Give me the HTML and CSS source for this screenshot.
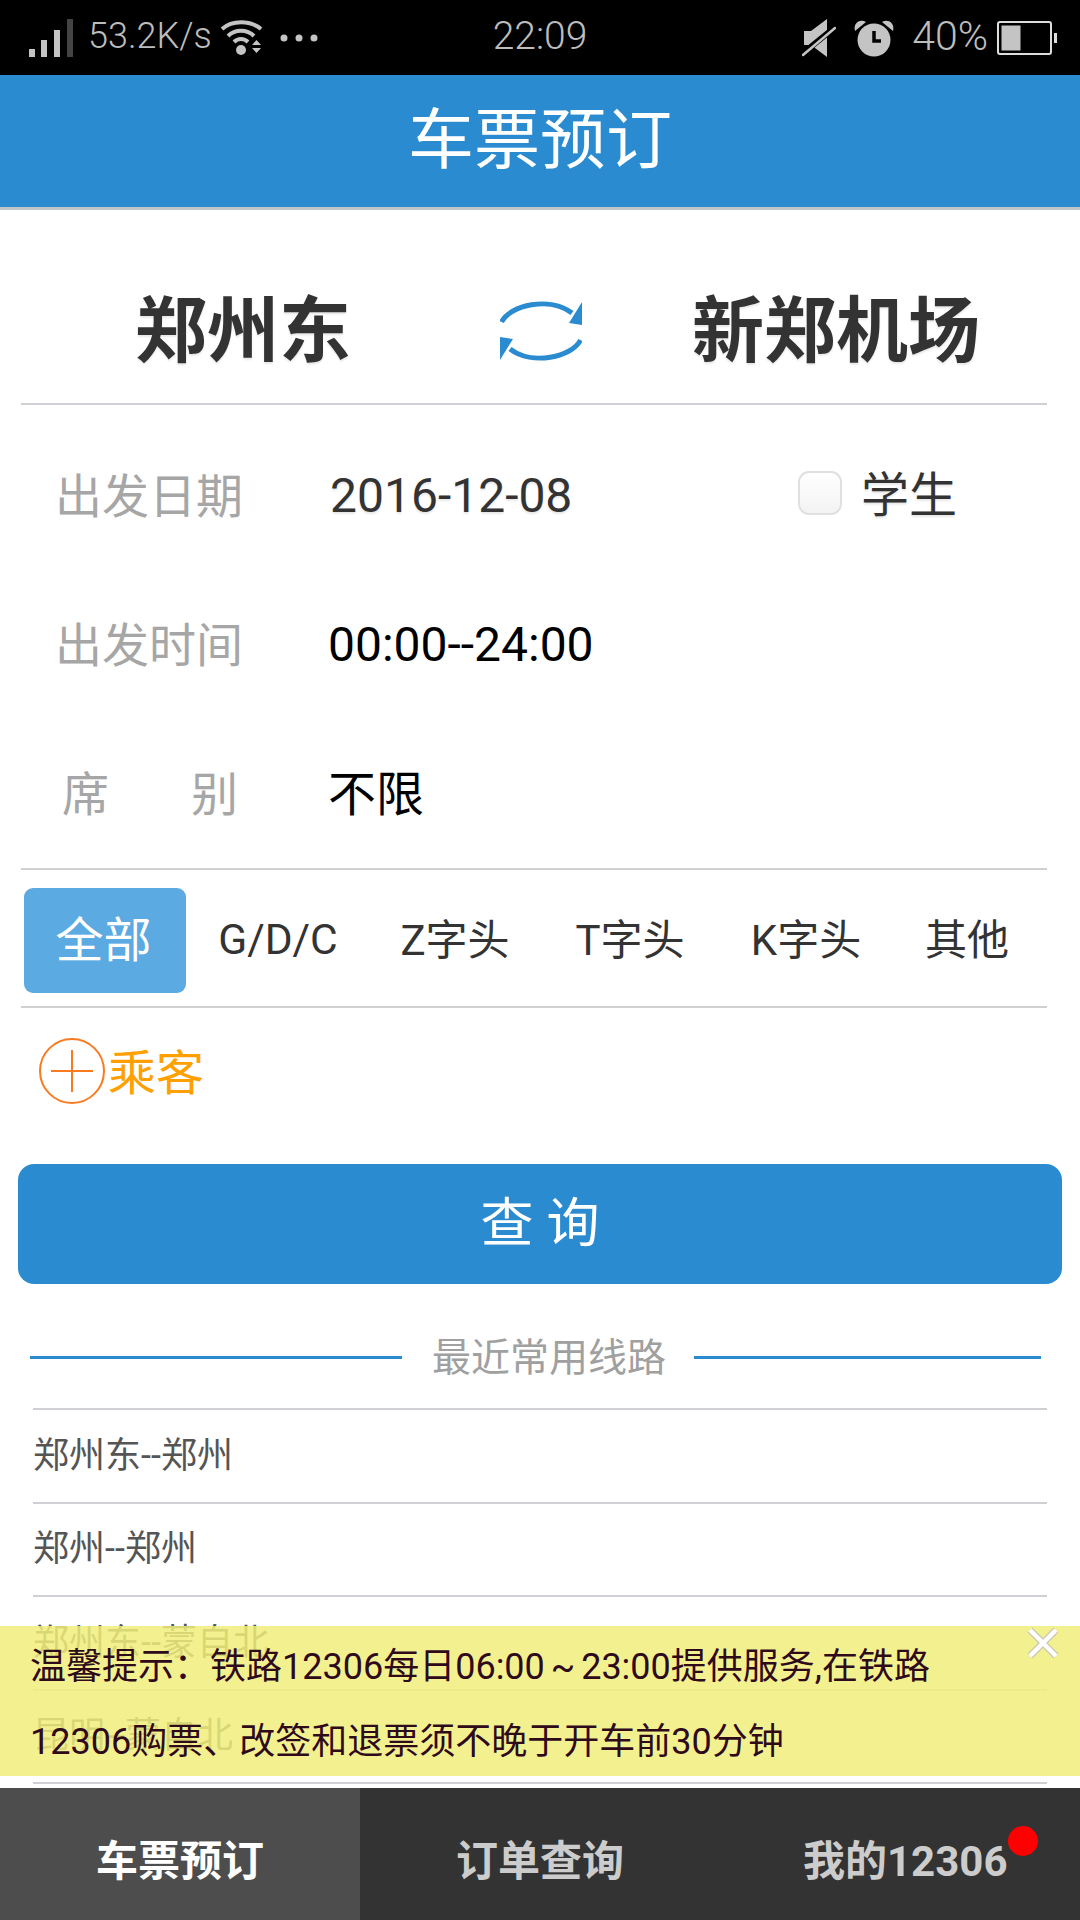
FILE: index.html
```html
<!DOCTYPE html>
<html lang="zh">
<head>
<meta charset="utf-8">
<title>车票预订</title>
<link rel="stylesheet" href="styles.css">
</head>
<body>
<div class="app">
  <div class="statusbar">
    <div class="status-left">
      <svg class="ic-signal" viewBox="0 0 45 38"><rect x="0" y="30" width="6" height="8" fill="#c4c4c4"/><rect x="12" y="21" width="6" height="17" fill="#c4c4c4"/><rect x="25" y="11" width="6" height="27" fill="#c4c4c4"/><rect x="38" y="0" width="6" height="38" fill="#444"/></svg>
      <span class="speed">53.2K/s</span>
      <svg class="ic-wifi" viewBox="0 0 44 38" fill="none" stroke="#c4c4c4" stroke-width="4"><path d="M2 10C12 1 30 1 41 10"/><path d="M8 17C15 10 27 10 34 17"/><path d="M14 23C18 19 24 19 28 23"/><circle cx="21" cy="31" r="5" fill="#c4c4c4" stroke="none"/><path d="M32 26h9l-4.500-5zM32 29h9l-4.500 5z" fill="#c4c4c4" stroke="none"/></svg>
      <svg class="ic-dots" viewBox="0 0 38 8"><circle cx="4" cy="4" r="3.500" fill="#c4c4c4"/><circle cx="19" cy="4" r="3.500" fill="#c4c4c4"/><circle cx="34" cy="4" r="3.500" fill="#c4c4c4"/></svg>
    </div>
    <span class="clock">22:09</span>
    <div class="status-right">
      <svg class="ic-mute" viewBox="0 0 34 38"><path d="M2 12h7L25 0v38L9 26H2z" fill="#c4c4c4"/><path d="M0 35L32 9" stroke="#000" stroke-width="6"/><path d="M1 36L33 9" stroke="#c4c4c4" stroke-width="2.500" stroke-linecap="round"/></svg>
      <svg class="ic-alarm" viewBox="0 0 40 38"><path d="M1 12C-1 5 5 -1 12 3zM39 12C41 5 35 -1 28 3z" fill="#c4c4c4"/><circle cx="20" cy="21" r="16.500" fill="#c4c4c4"/><path d="M20 12v10h7" fill="none" stroke="#000" stroke-width="3.500"/></svg>
      <span class="battery-text">40%</span>
      <svg class="ic-battery" viewBox="0 0 60 34"><rect x="1" y="1" width="53" height="32" rx="2" fill="none" stroke="#ddd" stroke-width="2"/><rect x="4.500" y="4.500" width="19" height="25" fill="#c4c4c4"/><rect x="57" y="12" width="3" height="10" fill="#ddd"/></svg>
    </div>
  </div>

  <header class="topbar">车票预订</header>

  <main class="content">
    <section class="stations">
      <div class="station">郑州东</div>
      <svg class="ic-swap" viewBox="0 0 82 62" fill="none"><g><path d="M1.500 22C10 5 50 -4 72 13" stroke="#2b8bd0" stroke-width="5"/><path d="M82 2V25L69 23z" fill="#2b8bd0"/></g><g transform="rotate(180 41 31)"><path d="M1.500 22C10 5 50 -4 72 13" stroke="#2b8bd0" stroke-width="5"/><path d="M82 2V25L69 23z" fill="#2b8bd0"/></g></svg>
      <div class="station station-to">新郑机场</div>
    </section>

    <section class="form">
      <div class="form-row">
        <span class="label">出发日期</span>
        <span class="value value-soft">2016-12-08</span>
        <span class="student"><span class="checkbox"></span><span class="student-text">学生</span></span>
      </div>
      <div class="form-row">
        <span class="label">出发时间</span>
        <span class="value">00:00--24:00</span>
      </div>
      <div class="form-row">
        <span class="label label-spread"><span>席</span><span>别</span></span>
        <span class="value value-cjk">不限</span>
      </div>
    </section>

    <nav class="types">
      <span class="type type-on">全部</span>
      <span class="type type-latin">G/D/C</span>
      <span class="type">Z字头</span>
      <span class="type">T字头</span>
      <span class="type">K字头</span>
      <span class="type">其他</span>
    </nav>

    <div class="passenger">
      <svg class="ic-plus" viewBox="0 0 66 66" fill="none" stroke="#f97b21" stroke-width="2"><circle cx="33" cy="33" r="32"/><path d="M12 33H54M33 12V54"/></svg>
      <span class="passenger-text">乘客</span>
    </div>

    <button class="search" type="button">查 询</button>

    <div class="recent-title"><span class="rule rule-left"></span><span class="recent-text">最近常用线路</span><span class="rule"></span></div>

    <ul class="routes">
      <li>郑州东--郑州</li>
      <li>郑州--郑州</li>
      <li>郑州东--蒙自北</li>
      <li>昆明--蒙自北</li>
      <li></li>
    </ul>

    <aside class="notice">
      <p>温馨提示：铁路12306每日06:00 ~ 23:00提供服务,在铁路</p>
      <p>12306购票、改签和退票须不晚于开车前30分钟</p>
      <svg class="ic-close" viewBox="0 0 34 34"><path d="M4 4L30 30M30 4L4 30" stroke="#c9c9b4" stroke-width="7"/><path d="M4 4L30 30M30 4L4 30" stroke="#fff" stroke-width="4.500"/></svg>
    </aside>
  </main>

  <footer class="tabbar">
    <span class="tab tab-on">车票预订</span>
    <span class="tab">订单查询</span>
    <span class="tab tab-me"><span class="tab-label">我的12306<span class="dot"></span></span></span>
  </footer>
</div>
</body>
</html>
```

FILE: styles.css
```css
* { box-sizing: border-box; }
html, body { margin: 0; padding: 0; background: #fff; }
body { font-family: Roboto, "Noto Sans CJK SC", sans-serif; color: #333; }
.app { width: 1080px; height: 1920px; display: flex; flex-direction: column; overflow: hidden; }

.statusbar { height: 75px; flex: none; background: #000; color: #bdbdbd; display: grid; grid-template-columns: 1fr auto 1fr; align-items: center; font-size: 36px; font-weight: 300; }
.status-left { display: flex; align-items: center; padding-left: 29px; }
.status-right { display: flex; align-items: center; justify-content: flex-end; padding-right: 23px; }
.speed { margin-left: 14px; padding-bottom: 3px; }
.ic-signal { width: 45px; height: 38px; margin-top: 1px; }
.ic-wifi { width: 44px; height: 38px; margin-left: 8px; }
.ic-dots { width: 38px; height: 8px; margin-left: 16px; }
.clock { font-size: 39px; padding-bottom: 3px; }
.ic-mute { width: 34px; height: 38px; }
.ic-alarm { width: 40px; height: 38px; margin-left: 18px; }
.battery-text { margin-left: 18px; font-size: 41px; padding-bottom: 3px; }
.ic-battery { width: 60px; height: 34px; margin-left: 9px; }

.topbar { height: 135px; flex: none; background: #2b8bd0; border-bottom: 3px solid #c2c6c9; color: #fff; font-size: 66px; display: flex; align-items: center; justify-content: center; padding-bottom: 14px; }

.content { position: relative; flex: 1; min-height: 0; overflow: hidden; }

.stations { height: 195px; margin: 0 33px 0 21px; padding-top: 36px; border-bottom: 2px solid #d0d0d4; display: grid; grid-template-columns: 444px 152px 1fr; align-items: center; justify-items: center; }
.station { font-size: 72px; font-weight: 700; color: #333; text-shadow: 0 2px 2px #e8e8e8; }
.station-to { padding-left: 8px; }
.ic-swap { width: 82px; height: 62px; margin-top: 12px; }

.form { margin: 0 33px 0 21px; padding-top: 16px; height: 465px; border-bottom: 2px solid #d0d0d0; }
.form-row { height: 149px; display: flex; align-items: center; padding-left: 34px; font-size: 48px; }
.label { width: 193px; margin-right: 80px; padding-bottom: 7px; color: #a6a6a6; font-size: 47px; flex: none; white-space: nowrap; }
.label-spread { display: flex; justify-content: space-between; padding: 0 10px 7px 7px; }
.value { color: #000; font-size: 48px; }
.value-soft { margin-left: 2px; color: #333; text-shadow: 0 2px 2px #e8e8e8; }
.value-cjk { padding-bottom: 8px; }
.student { margin-left: auto; margin-right: 90px; padding-bottom: 5px; display: flex; align-items: center; color: #333; text-shadow: 0 2px 2px #e8e8e8; }
.student-text { padding-bottom: 5px; }
.checkbox { width: 44px; height: 44px; margin-right: 19px; border: 2px solid #e0e0e0; border-radius: 11px; background: linear-gradient(#fff, #f3f3f3); }

.types { margin: 0 33px 0 21px; height: 138px; padding: 18px 0 14px 3px; border-bottom: 2px solid #d0d0d0; display: grid; grid-template-columns: 162px 184px 170px 180px 172px 150px; align-items: center; justify-items: center; font-size: 42px; color: #333; }
.type { display: flex; align-items: center; justify-content: center; padding-bottom: 9px; }
.type-latin { font-size: 42.500px; padding-bottom: 2px; }
.type-on { width: 162px; height: 105px; padding-right: 3px; border-radius: 9px; background: #5caae2; color: #fff; font-size: 48px; }

.passenger { height: 125px; padding: 0 0 0 39px; display: flex; align-items: center; color: #ffa000; font-size: 48px; }
.passenger-text { padding-bottom: 4px; }
.ic-plus { width: 66px; height: 66px; margin-right: 3px; }

.search { display: block; width: 1044px; height: 120px; margin: 31px 0 0 18px; padding: 0 0 10px; border: 0; border-radius: 16px; background: #2b8bd0; color: #fff; font: inherit; font-size: 53px; }

.recent-title { margin: 50px 39px 0 30px; height: 46px; display: flex; align-items: center; }
.rule { flex: 1; height: 3px; background: #2b8bd0; }
.rule-left { flex: none; width: 372px; }
.recent-text { margin: 0 28px 0 30px; padding-bottom: 6px; color: #a0a0a0; font-size: 39px; }

.routes { list-style: none; margin: 28px 33px 0 33px; padding: 0; border-top: 2px solid #d0d0d4; }
.routes li { height: 93.500px; display: flex; align-items: center; padding-bottom: 8px; border-bottom: 2px solid #d0d0d4; font-size: 36px; color: #555; }

.notice { position: absolute; left: 0; right: 0; top: 1416px; height: 150px; padding: 0 30px; background: rgba(241, 239, 123, 0.85); color: #2e0a1a; font-size: 36px; word-spacing: -3px; }
.notice p { margin: 0; height: 75px; padding-top: 4px; line-height: 75px; white-space: nowrap; }
.ic-close { position: absolute; top: 0; right: 20px; width: 34px; height: 34px; }

.tabbar { height: 132px; flex: none; display: grid; grid-template-columns: 360px 1fr 1fr; background: #333; color: #ccc; font-size: 42px; font-weight: 700; position: relative; }
.tab { display: flex; align-items: center; justify-content: center; padding-top: 6px; }
.tab-on { background: #4d4d4d; color: #fff; }
.tab-me { justify-content: flex-start; padding-left: 83px; }
.tab-label { position: relative; }
.dot { position: absolute; top: -1px; right: -31px; width: 30px; height: 30px; border-radius: 50%; background: #f00; }
```
